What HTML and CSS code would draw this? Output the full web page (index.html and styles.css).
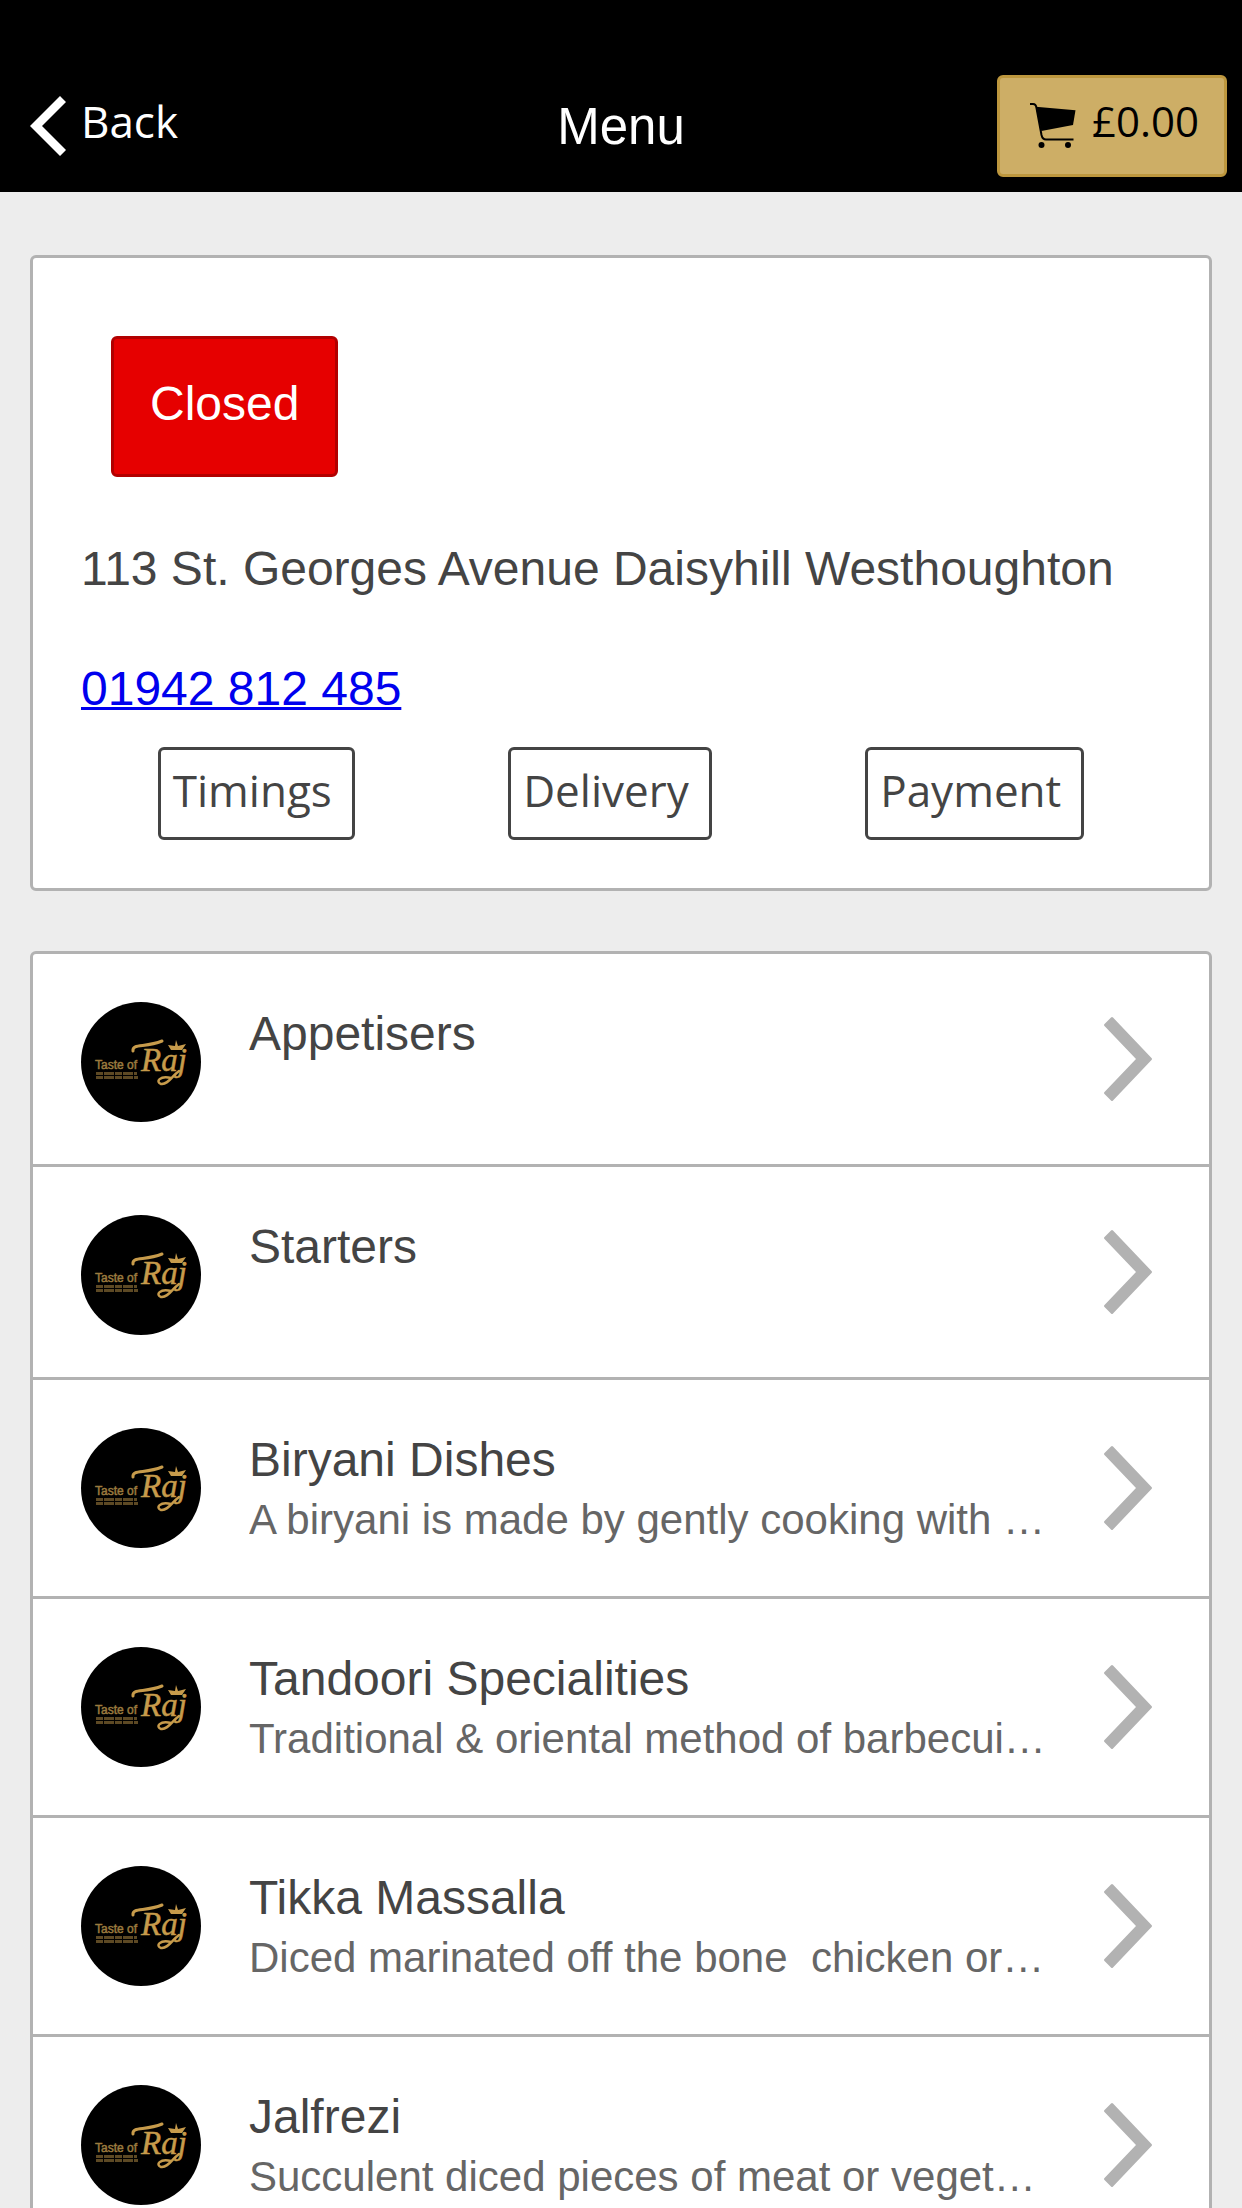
FILE: index.html
```html
<!DOCTYPE html>
<html lang="en">
<head>
    <meta charset="UTF-8">
    <meta name="viewport" content="width=device-width, initial-scale=1.0">
    <title>Menu</title>
    <link rel="stylesheet" href="styles.css">
</head>
<body>
    <!-- Shared icons -->
    <svg class="sprite" aria-hidden="true">
        <symbol id="logo" viewBox="0 0 120 120">
            <circle cx="60" cy="60" r="60" fill="#000"/>
            <text class="logo-small" x="14" y="67">Taste of</text>
            <path d="M15 71.500H56M15 75.500H57" stroke="#5d4924" stroke-width="3" stroke-dasharray="7 1 10 1"/>
            <path d="M52 49C51 41 64 46 81 39" fill="none" stroke="#c79b4b" stroke-width="3" stroke-linecap="round"/>
            <text class="logo-script" x="60" y="69">Raj</text>
            <path d="M90 76C79 73 74 80 80 82C87 83 91 74 98 69" fill="none" stroke="#c79b4b" stroke-width="2.500" stroke-linecap="round"/>
            <path d="M87 43L94 44L95 38L97 44L105 42L101 48H90Z" fill="#c79b4b"/>
        </symbol>
        <symbol id="chevron" viewBox="0 0 48 84">
            <path d="M7 0.500L0.500 7Q-0.500 8 0.500 9L32 42L0.500 75Q-0.500 76 0.500 77L7 83.500Q8 84.500 9 83.500L47.500 43Q48.500 42 47.500 41L9 0.500Q8 -0.500 7 0.500Z" fill="#b2b2b2"/>
        </symbol>
    </svg>

    <div class="app">
        <header class="header">
            <button class="back-btn" type="button">
                <svg class="back-icon" viewBox="0 0 36 60" aria-hidden="true"><path d="M30 0L0 30L30 60L36 54L12 30L36 6Z" fill="#fff"/></svg>
                <span>Back</span>
            </button>
            <h1 class="header-title">Menu</h1>
            <button class="cart-btn" type="button">
                <svg class="cart-icon" viewBox="0 0 46 46" aria-hidden="true">
                    <path d="M0 1H3Q6 1 6.500 5L11.500 32Q12.500 36.500 16 36.500H43.500" fill="none" stroke="#000" stroke-width="2"/>
                    <path d="M5.700 3.700L45.500 7.300L43 22L11.400 28Z"/>
                    <circle cx="11.500" cy="42" r="3"/>
                    <circle cx="38" cy="42" r="3"/>
                </svg>
                <span>£0.00</span>
            </button>
        </header>

        <main class="content">
            <!-- Restaurant info -->
            <section class="card info">
                <div class="status">Closed</div>
                <p class="address">113 St. Georges Avenue Daisyhill Westhoughton</p>
                <a class="phone" href="tel:01942812485">01942 812 485</a>
                <div class="info-buttons">
                    <button class="info-btn" type="button">Timings</button>
                    <button class="info-btn" type="button">Delivery</button>
                    <button class="info-btn" type="button">Payment</button>
                </div>
            </section>

            <!-- Menu categories -->
            <ul class="card category-list">
                <li>
                    <a class="category" href="#">
                        <svg class="category-logo" aria-hidden="true"><use href="#logo"/></svg>
                        <div class="category-text">
                            <h2>Appetisers</h2>
                        </div>
                        <svg class="category-arrow" aria-hidden="true"><use href="#chevron"/></svg>
                    </a>
                </li>
                <li>
                    <a class="category" href="#">
                        <svg class="category-logo" aria-hidden="true"><use href="#logo"/></svg>
                        <div class="category-text">
                            <h2>Starters</h2>
                        </div>
                        <svg class="category-arrow" aria-hidden="true"><use href="#chevron"/></svg>
                    </a>
                </li>
                <li>
                    <a class="category" href="#">
                        <svg class="category-logo" aria-hidden="true"><use href="#logo"/></svg>
                        <div class="category-text">
                            <h2>Biryani Dishes</h2>
                            <p>A biryani is made by gently cooking with …</p>
                        </div>
                        <svg class="category-arrow" aria-hidden="true"><use href="#chevron"/></svg>
                    </a>
                </li>
                <li>
                    <a class="category" href="#">
                        <svg class="category-logo" aria-hidden="true"><use href="#logo"/></svg>
                        <div class="category-text">
                            <h2>Tandoori Specialities</h2>
                            <p>Traditional &amp; oriental method of barbecui…</p>
                        </div>
                        <svg class="category-arrow" aria-hidden="true"><use href="#chevron"/></svg>
                    </a>
                </li>
                <li>
                    <a class="category" href="#">
                        <svg class="category-logo" aria-hidden="true"><use href="#logo"/></svg>
                        <div class="category-text">
                            <h2>Tikka Massalla</h2>
                            <p>Diced marinated off the bone  chicken or…</p>
                        </div>
                        <svg class="category-arrow" aria-hidden="true"><use href="#chevron"/></svg>
                    </a>
                </li>
                <li>
                    <a class="category" href="#">
                        <svg class="category-logo" aria-hidden="true"><use href="#logo"/></svg>
                        <div class="category-text">
                            <h2>Jalfrezi</h2>
                            <p>Succulent diced pieces of meat or veget…</p>
                        </div>
                        <svg class="category-arrow" aria-hidden="true"><use href="#chevron"/></svg>
                    </a>
                </li>
            </ul>
        </main>
    </div>
</body>
</html>
```
FILE: styles.css
```css
* {
    box-sizing: border-box;
}
body {
    font-family: "Liberation Sans", Arial, sans-serif;
    font-size: 48px;
    line-height: 57px;
    color: #444;
    background-color: #ededed;
    margin: 0;
}
h1, h2, p, ul {
    margin: 0;
    padding: 0;
    font-weight: normal;
}
button {
    font-family: "Open Sans", "Noto Sans", sans-serif;
    font-size: 44px;
    line-height: 60px;
    cursor: pointer;
}
.sprite {
    display: none;
}
.app {
    display: flex;
    flex-direction: column;
    height: 100vh;
}

/* Header */
.header {
    display: grid;
    grid-template-columns: 1fr auto 1fr;
    align-items: center;
    background-color: #000;
    padding: 75px 15px 15px;
}
.header-title {
    color: #fff;
    font-size: 51px;
}
.back-btn {
    display: flex;
    align-items: center;
    justify-self: start;
    gap: 15px;
    padding: 0 15px;
    color: #fff;
    background: none;
    border: none;
}
.back-btn span,
.cart-btn span {
    padding-bottom: 10px;
}
.back-icon {
    width: 36px;
    height: 60px;
}
.cart-btn {
    display: flex;
    align-items: center;
    justify-self: end;
    gap: 16px;
    padding: 13px 25px 13px 30px;
    color: #000;
    font-size: 42px;
    background-color: #cdae66;
    border: 3px solid #bd973e;
    border-radius: 6px;
}
.cart-icon {
    width: 46px;
    height: 46px;
}

/* Cards */
.content {
    flex: 1;
    overflow-y: auto;
    scrollbar-width: none;
    padding: 63px 30px;
}
.card {
    background-color: #fff;
    border: 3px solid #b2b2b2;
    border-radius: 6px;
}
.info {
    padding: 48px;
    margin-bottom: 60px;
}
.status {
    width: fit-content;
    margin: 30px 30px 63px;
    padding: 36px 36px 42px;
    color: #fff;
    background-color: #e60000;
    border: 3px solid #b20000;
    border-radius: 6px;
}
.address {
    margin-bottom: 63px;
}
.phone {
    display: block;
    width: fit-content;
    color: #00e;
    text-decoration-thickness: 3px;
}
.info-buttons {
    display: flex;
    justify-content: space-around;
    margin-top: 30px;
}
.info-btn {
    padding: 10px 20px 17px 12px;
    color: #444;
    background-color: #fff;
    border: 3px solid #444;
    border-radius: 6px;
}

/* Category list */
.category-list {
    list-style: none;
}
.category-list li + li {
    border-top: 3px solid #b2b2b2;
}
.category {
    display: flex;
    align-items: center;
    padding: 0 57px 0 48px;
    color: #444;
    text-decoration: none;
}
.category-logo {
    flex: none;
    align-self: flex-start;
    width: 120px;
    height: 120px;
    margin: 48px 48px 42px 0;
}
.category-text {
    flex: 1;
    align-self: flex-start;
    min-width: 0;
    padding: 48px 0;
}
.category-text h2 {
    font-size: 48px;
    line-height: 63px;
}
.category-text p {
    font-size: 42px;
    line-height: 57px;
    color: #666;
    white-space: pre;
    overflow: hidden;
    text-overflow: ellipsis;
}
.category-arrow {
    flex: none;
    width: 48px;
    height: 84px;
    margin-left: 48px;
}
.logo-small {
    font-family: "Liberation Sans Narrow", "Liberation Sans", sans-serif;
    font-size: 12px;
    fill: #9a7a3e;
    stroke: #9a7a3e;
    stroke-width: 0.5px;
}
.logo-script {
    font-family: "Liberation Serif", serif;
    font-size: 33px;
    font-style: italic;
    fill: #c79b4b;
    stroke: #c79b4b;
    stroke-width: 0.5px;
}
```
